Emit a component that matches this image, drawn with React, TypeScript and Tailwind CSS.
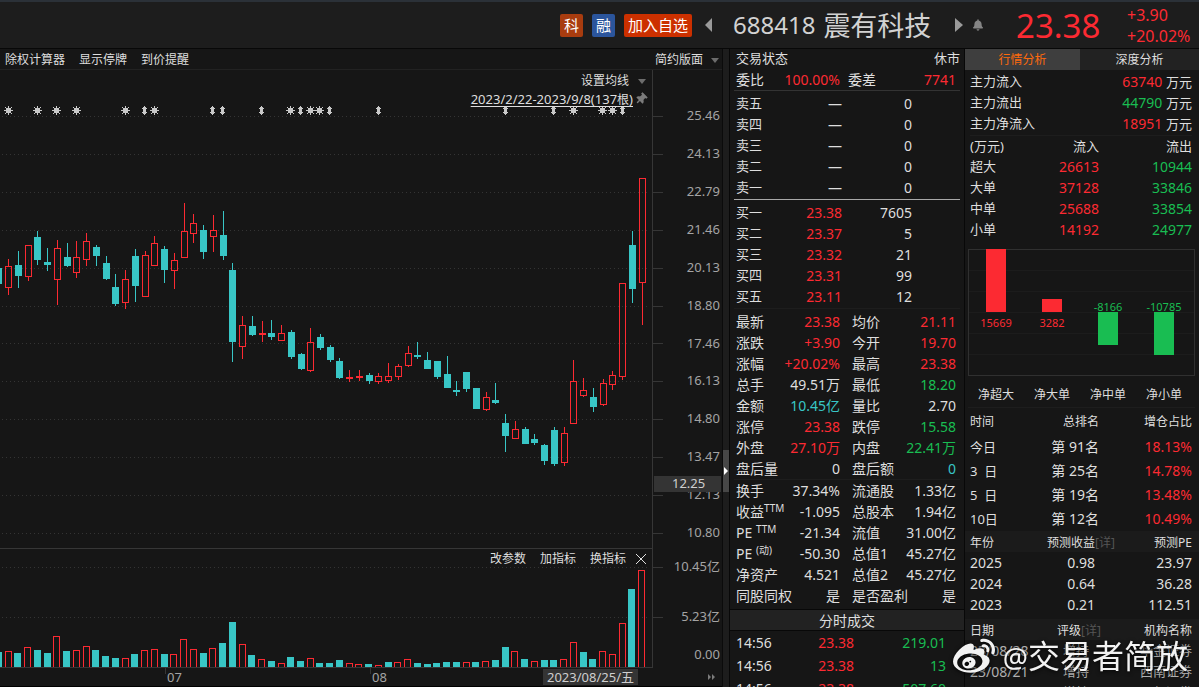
import React from "react";
import { FaBell, FaThumbtack, FaWeibo } from "react-icons/fa";

const RED = "#fc2a32";
const TEAL = "#38c6c6";
const GREEN = "#19bd52";

type Candle = ["r" | "t", number, number, number, number, number, number, number];

// kind, x, high, body top, body bottom, low, volume x, volume top
const candles: Candle[] = [
  ["t", -5, 268, 268, 284, 284, -5, 652],
  ["r", 5, 259, 266, 288, 295, 5, 651],
  ["t", 15, 251, 265, 276, 288, 14, 653],
  ["r", 25, 245, 245, 277, 281, 24, 647],
  ["t", 34, 231, 237, 260, 265, 34, 650],
  ["t", 44, 248, 262, 265, 271, 44, 653],
  ["r", 54, 240, 248, 280, 305, 53, 636],
  ["t", 64, 243, 257, 266, 267, 63, 651],
  ["r", 73, 241, 257, 273, 278, 73, 650],
  ["r", 83, 233, 241, 260, 266, 83, 646],
  ["t", 93, 245, 247, 256, 266, 92, 650],
  ["t", 103, 256, 263, 279, 280, 102, 656],
  ["t", 112, 274, 287, 304, 306, 112, 658],
  ["r", 122, 270, 279, 303, 309, 122, 658],
  ["t", 132, 249, 256, 286, 302, 131, 654],
  ["r", 142, 251, 255, 297, 297, 141, 650],
  ["r", 151, 236, 243, 266, 266, 151, 649],
  ["t", 161, 246, 249, 270, 283, 161, 654],
  ["r", 171, 253, 260, 271, 289, 170, 654],
  ["r", 181, 203, 231, 258, 258, 180, 639],
  ["r", 190, 214, 223, 234, 243, 190, 649],
  ["t", 200, 225, 230, 252, 259, 200, 653],
  ["r", 210, 215, 230, 237, 252, 209, 648],
  ["t", 220, 211, 235, 256, 260, 219, 643],
  ["t", 229, 263, 270, 342, 362, 229, 622],
  ["r", 239, 316, 325, 347, 359, 239, 644],
  ["t", 249, 316, 326, 335, 336, 248, 655],
  ["r", 259, 321, 333, 335, 342, 258, 659],
  ["t", 268, 320, 333, 337, 340, 268, 661],
  ["r", 278, 325, 333, 341, 341, 278, 663],
  ["t", 288, 330, 332, 357, 359, 287, 657],
  ["t", 298, 353, 354, 369, 370, 297, 661],
  ["r", 307, 328, 342, 371, 372, 307, 658],
  ["t", 317, 334, 337, 348, 350, 316, 663],
  ["t", 327, 345, 347, 360, 362, 326, 663],
  ["t", 336, 358, 361, 378, 379, 336, 660],
  ["r", 346, 370, 377, 379, 382, 346, 663],
  ["r", 356, 370, 376, 378, 381, 355, 664],
  ["t", 366, 373, 375, 381, 384, 365, 664],
  ["r", 375, 373, 376, 382, 384, 375, 665],
  ["r", 385, 363, 376, 381, 383, 385, 662],
  ["r", 395, 364, 366, 377, 380, 394, 662],
  ["r", 405, 346, 353, 366, 367, 404, 659],
  ["t", 414, 342, 355, 357, 359, 414, 663],
  ["t", 424, 352, 360, 369, 369, 424, 664],
  ["t", 434, 361, 361, 377, 379, 433, 663],
  ["t", 444, 356, 374, 388, 388, 443, 662],
  ["t", 453, 381, 390, 392, 396, 453, 662],
  ["t", 463, 372, 372, 389, 392, 463, 662],
  ["t", 473, 388, 388, 409, 409, 472, 662],
  ["r", 483, 392, 397, 410, 411, 482, 661],
  ["t", 492, 383, 400, 403, 404, 492, 660],
  ["t", 502, 414, 423, 436, 452, 502, 647],
  ["r", 512, 421, 429, 439, 439, 511, 651],
  ["t", 522, 427, 429, 444, 444, 521, 659],
  ["t", 531, 434, 439, 443, 445, 531, 661],
  ["t", 541, 444, 445, 461, 465, 541, 660],
  ["t", 551, 427, 430, 464, 466, 550, 660],
  ["r", 561, 427, 433, 463, 466, 560, 659],
  ["r", 570, 360, 381, 424, 424, 570, 642],
  ["r", 580, 378, 390, 396, 397, 580, 652],
  ["t", 590, 388, 397, 407, 412, 589, 659],
  ["r", 600, 379, 383, 405, 406, 599, 651],
  ["r", 609, 371, 375, 385, 390, 609, 654],
  ["r", 619, 283, 283, 377, 380, 619, 623],
  ["t", 629, 231, 245, 289, 303, 628, 589],
  ["r", 639, 178, 178, 283, 325, 638, 570],
];

// sessions where the volume bar is coloured differently from the candle
const volumeKind: Record<number, "r" | "t"> = { 40: "t", 41: "r", 48: "r", 55: "r", 60: "t" };

const gridRows = [116, 154, 192, 230, 268, 306, 343, 381, 419, 457, 495, 533, 567, 617];
const suns = [8, 37, 56, 76, 125, 154, 290, 310, 319, 573, 602, 612];
const arrows = [144, 212, 222, 261, 300, 329, 378, 505, 553, 622];

function ChartDrawing() {
  return (
    <svg
      viewBox="0 70 652 598"
      preserveAspectRatio="none"
      shapeRendering="crispEdges"
      className="block h-[598px] w-full"
      role="img"
      aria-label="K线图"
    >
      {gridRows.map((y) => (
        <line key={y} x1="2" x2="650" y1={y + 0.5} y2={y + 0.5} stroke="#343434" strokeDasharray="1 3" />
      ))}
      <rect x="0" y="548" width="652" height="1" fill="#363636" />
      {suns.map((x) => (
        <g key={x} fill="#c9c9c9">
          <rect x={x - 2} y="108" width="5" height="5" />
          <rect x={x} y="106" width="1" height="9" />
          <rect x={x - 4} y="110" width="9" height="1" />
          <rect x={x - 3} y="107" width="1" height="1" />
          <rect x={x + 3} y="107" width="1" height="1" />
          <rect x={x - 3} y="113" width="1" height="1" />
          <rect x={x + 3} y="113" width="1" height="1" />
        </g>
      ))}
      {arrows.map((x) => (
        <g key={x} fill="#c9c9c9">
          <rect x={x} y="106" width="1" height="9" />
          <rect x={x - 1} y="107" width="3" height="7" />
          <rect x={x - 2} y="108" width="5" height="1" />
          <rect x={x - 2} y="112" width="5" height="1" />
        </g>
      ))}
      {candles.map(([kind, x, high, top, bottom, low, vx, vTop], i) => {
        const color = kind === "r" ? RED : TEAL;
        const vKind = volumeKind[i] ?? kind;
        const hollow = kind === "r" && bottom - top > 3;
        return (
          <g key={i}>
            {top > high && <rect x={x + 3} y={high} width="1" height={top - high} fill={color} />}
            {low > bottom && <rect x={x + 3} y={bottom} width="1" height={low - bottom} fill={color} />}
            {hollow ? (
              <rect x={x + 0.5} y={top + 0.5} width="6" height={bottom - top - 1} fill="none" stroke={color} />
            ) : (
              <rect x={x} y={top} width="7" height={bottom - top} fill={color} />
            )}
            {vKind === "r" ? (
              <path d={`M${vx + 0.5} 667V${vTop + 0.5}H${vx + 6.5}V667`} fill="none" stroke={RED} />
            ) : (
              <rect x={vx} y={vTop} width="7" height={667 - vTop} fill={TEAL} />
            )}
          </g>
        );
      })}
      <rect x="0" y="667" width="652" height="1" fill="#363636" />
    </svg>
  );
}

function Caret() {
  return (
    <svg viewBox="0 0 8 5" className="h-[5px] w-2 shrink-0" aria-hidden="true">
      <path d="M0 0h8L4 5z" fill="#6c6c6c" />
    </svg>
  );
}

const priceLabels = ["25.46", "24.13", "22.79", "21.46", "20.13", "18.80", "17.46", "16.13", "14.80", "13.47", "12.13", "10.80"];

function Tick() {
  return <span className="h-px w-[10px] bg-[#363636]" />;
}

function ChartPanel() {
  return (
    <section className="flex min-w-0 flex-1 flex-col border-r border-[#0b0b0b] bg-[#161616]">
      <div className="flex h-[21px] shrink-0 items-center justify-between border-b border-[#222] pl-[5px] pr-[3px] pt-[2px] text-xs">
        <div className="flex gap-[14px]">
          <button type="button">除权计算器</button>
          <button type="button">显示停牌</button>
          <button type="button">到价提醒</button>
        </div>
        <button type="button" aria-haspopup="menu" className="flex items-center gap-2">
          简约版面
          <Caret />
        </button>
      </div>

      <div className="flex">
        <div className="relative min-w-0 flex-1">
          <ChartDrawing />
          <div className="absolute right-[5px] top-[2px] flex flex-col items-end text-xs leading-[18px]">
            <button type="button" aria-haspopup="menu" className="flex items-center gap-[9px] pr-px">
              设置均线
              <Caret />
            </button>
            <div className="flex items-center gap-[2px]">
              <a href="#range" className="text-[13px] leading-[18px] underline underline-offset-2">
                2023/2/22-2023/9/8(137<span className="text-xs">根</span>)
              </a>
              <button type="button" aria-label="固定">
                <FaThumbtack className="h-3 w-3 rotate-45 text-[#7b7b7b]" />
              </button>
            </div>
          </div>
          <div className="absolute right-[6px] top-[479px] flex h-5 items-center gap-[14px] text-xs">
            <button type="button">改参数</button>
            <button type="button">加指标</button>
            <button type="button">换指标</button>
            <button type="button" aria-label="关闭" className="-ml-1">
              <svg viewBox="0 0 10 10" className="h-[10px] w-[10px]">
                <path d="M0 0L10 10M10 0L0 10" stroke="#e0e0e0" strokeWidth="1" />
              </svg>
            </button>
          </div>
        </div>
        <div className="relative w-[70px] shrink-0 border-l border-[#363636] pt-[27px] text-[13px] text-[#a4a4a4]">
          {priceLabels.map((label) => (
            <div
              key={label}
              className={`flex items-center justify-between pr-[2px] ${label === "17.46" ? "h-[37px]" : "h-[38px]"}`}
            >
              <Tick />
              {label}
            </div>
          ))}
          <div className="mt-[5px] flex h-5 items-center justify-between pr-[2px]">
            <Tick />
            <span>10.45亿</span>
          </div>
          <div className="mt-[30px] flex h-5 items-center justify-between pr-[2px]">
            <Tick />
            <span>5.23亿</span>
          </div>
          <div className="mt-[18px] flex h-5 items-center justify-end pr-[2px]">0.00</div>
          <div className="absolute left-px right-px top-[406px] flex h-4 items-center bg-[#343434] pl-[18px] text-[#cfcfcf]">
            12.25
          </div>
        </div>
      </div>

      <div className="grid h-[18px] grid-cols-[165fr_205fr_282fr_70px] text-[13px] leading-[18px] text-[#a4a4a4]">
        <div />
        <div className="flex">
          <span className="h-[6px] w-px bg-[#363636]" />
          <span className="pl-px">07</span>
        </div>
        <div className="flex">
          <span className="h-[6px] w-px bg-[#363636]" />
          <span className="pl-px">08</span>
          <span className="ml-auto mr-[14px] mt-px h-4 whitespace-nowrap bg-[#343434] px-1 leading-4 text-[#cfcfcf]">
            2023/08/25/五
          </span>
        </div>
        <div className="flex items-center justify-end pr-[6px]">
          <svg viewBox="0 0 8 6" className="h-[6px] w-2" aria-hidden="true">
            <path d="M0 0l3 3-3 3zM4 0l3 3-3 3z" fill="#7b7b7b" />
          </svg>
        </div>
      </div>
      <div className="h-px bg-black" />
    </section>
  );
}

const sells = ["卖五", "卖四", "卖三", "卖二", "卖一"];
const buys = [
  ["买一", "23.38", "7605"],
  ["买二", "23.37", "5"],
  ["买三", "23.32", "21"],
  ["买四", "23.31", "99"],
  ["买五", "23.11", "12"],
];

type Stat = [React.ReactNode, string, string];
const W = "text-[#dedede]";
const R = "text-[#fc2a32]";
const G = "text-[#19bd52]";
const T = "text-[#38c6c6]";

const statsA: Stat[] = [
  ["最新", "23.38", R], ["均价", "21.11", R],
  ["涨跌", "+3.90", R], ["今开", "19.70", R],
  ["涨幅", "+20.02%", R], ["最高", "23.38", R],
  ["总手", "49.51万", W], ["最低", "18.20", G],
  ["金额", "10.45亿", T], ["量比", "2.70", W],
  ["涨停", "23.38", R], ["跌停", "15.58", G],
  ["外盘", "27.10万", R], ["内盘", "22.41万", G],
  ["盘后量", "0", W], ["盘后额", "0", T],
];

const statsB: Stat[] = [
  ["换手", "37.34%", W], ["流通股", "1.33亿", W],
  [<>收益<Sup>TTM</Sup></>, "-1.095", W], ["总股本", "1.94亿", W],
  [<>PE <Sup>TTM</Sup></>, "-21.34", W], ["流值", "31.00亿", W],
  [<>PE <Sup>(动)</Sup></>, "-50.30", W], ["总值1", "45.27亿", W],
  ["净资产", "4.521", W], ["总值2", "45.27亿", W],
  ["同股同权", "是", W], ["是否盈利", "是", W],
];

function Sup({ children }: { children: React.ReactNode }) {
  return <sup className="text-[10px] leading-none">{children}</sup>;
}

function Stats({ items }: { items: Stat[] }) {
  return (
    <dl className="grid grid-cols-2 gap-x-3 pl-[2px] pr-1">
      {items.map(([label, value, tone], i) => (
        <div key={i} className="flex h-[21px] justify-between whitespace-nowrap leading-[21px]">
          <dt>{label}</dt>
          <dd className={tone}>{value}</dd>
        </div>
      ))}
    </dl>
  );
}

function BookColumns() {
  return (
    <colgroup>
      <col className="w-[52px]" />
      <col className="w-[56px]" />
      <col className="w-[70px]" />
      <col />
    </colgroup>
  );
}

function TradePanel() {
  return (
    <section className="flex w-[235px] shrink-0 flex-col border-l border-[#080808] bg-[#161616] text-sm">
      <div className="px-1">
        <div className="flex h-5 justify-between pl-[2px] text-[13px] leading-[19px]">
          <span>交易状态</span>
          <span>休市</span>
        </div>
        <dl className="grid grid-cols-[104px_1fr] gap-x-2 border-b border-[#333] pl-[2px] pr-1 leading-[21px]">
          <div className="flex justify-between">
            <dt>委比</dt>
            <dd className={R}>100.00%</dd>
          </div>
          <div className="flex justify-between">
            <dt>委差</dt>
            <dd className={R}>7741</dd>
          </div>
        </dl>
        <div className="border-b border-[#a8a8a8] pb-px pt-[2px]">
          <table className="w-full table-fixed leading-[21px]">
            <BookColumns />
            <tbody>
              {sells.map((s) => (
                <tr key={s} className="h-[21px]">
                  <th scope="row" className="pl-[2px] text-left text-[13px] font-normal leading-[21px]">{s}</th>
                  <td className="text-right">—</td>
                  <td className="text-right">0</td>
                  <td />
                </tr>
              ))}
            </tbody>
          </table>
        </div>
        <div className="border-b border-[#1d1d1d] pb-px pt-[2px]">
          <table className="w-full table-fixed leading-[21px]">
            <BookColumns />
            <tbody>
              {buys.map(([name, price, qty]) => (
                <tr key={name} className="h-[21px]">
                  <th scope="row" className="pl-[2px] text-left text-[13px] font-normal leading-[21px]">{name}</th>
                  <td className={`text-right ${R}`}>{price}</td>
                  <td className="text-right">{qty}</td>
                  <td />
                </tr>
              ))}
            </tbody>
          </table>
        </div>
        <div className="border-b border-[#1d1d1d] pt-[2px]">
          <Stats items={statsA} />
        </div>
        <Stats items={statsB} />
      </div>
      <h2 className="mt-[3px] h-[22px] shrink-0 border-y border-[#080808] bg-[#222] pt-px text-center text-sm font-normal leading-[20px]">
        分时成交
      </h2>
      <table className="w-full table-fixed leading-[23px]">
        <colgroup>
          <col className="w-[54px]" />
          <col className="w-[70px]" />
          <col />
        </colgroup>
        <tbody>
          {["219.01", "13", "507.60"].map((v) => (
            <tr key={v} className="h-[23px]">
              <td className="pl-[6px]">14:56</td>
              <td className={`text-right ${R}`}>23.38</td>
              <td className={`pr-[18px] text-right ${G}`}>{v}</td>
            </tr>
          ))}
        </tbody>
      </table>
    </section>
  );
}

const mainFlow = [
  ["主力流入", "63740", R],
  ["主力流出", "44790", G],
  ["主力净流入", "18951", R],
];
const orders = [
  ["超大", "26613", "10944"],
  ["大单", "37128", "33846"],
  ["中单", "25688", "33854"],
  ["小单", "14192", "24977"],
];
const bars = [
  { value: "15669", name: "净超大", y: 0, h: 63, color: RED, textY: 78 },
  { value: "3282", name: "净大单", y: 50, h: 13, color: RED, textY: 78 },
  { value: "-8166", name: "净中单", y: 63, h: 33, color: GREEN, textY: 62 },
  { value: "-10785", name: "净小单", y: 63, h: 43, color: GREEN, textY: 62 },
];
const ranks = [
  ["今日", "第 91名", "18.13%"],
  ["3  日", "第 25名", "14.78%"],
  ["5  日", "第 19名", "13.48%"],
  ["10日", "第 12名", "10.49%"],
];
const forecasts = [
  ["2025", "0.98", "23.97"],
  ["2024", "0.64", "36.28"],
  ["2023", "0.21", "112.51"],
];
const ratings = [
  ["23/08/28", "增持", "华金证券"],
  ["23/08/21", "增持", "西南证券"],
  ["23/08/20", "增持", "西部证券"],
];

function Cols({ middle }: { middle: string }) {
  return (
    <colgroup>
      <col className="w-[60px]" />
      <col className={middle} />
      <col />
    </colgroup>
  );
}

function AnalysisPanel() {
  return (
    <section className="flex w-[235px] shrink-0 flex-col border-l border-[#080808] bg-[#161616] text-sm">
      <div role="tablist" className="grid h-[21px] shrink-0 grid-cols-[115px_1fr] bg-[#222] text-xs">
        <button type="button" role="tab" aria-selected="true" className="bg-[#3e3e3e] pt-px text-[#ff6a0c]">
          行情分析
        </button>
        <button type="button" role="tab" aria-selected="false" className="pt-px">
          深度分析
        </button>
      </div>

      <div className="pl-[5px] pr-[7px]">
        <dl className="border-b border-[#1d1d1d] pb-px pt-px">
          {mainFlow.map(([label, value, tone]) => (
            <div key={label} className="flex h-[21px] justify-between leading-[21px]">
              <dt className="text-[13px]">{label}</dt>
              <dd className={tone}>
                {value} <span className="text-[13px] text-[#dedede]">万元</span>
              </dd>
            </div>
          ))}
        </dl>
        <table className="w-full table-fixed">
          <Cols middle="w-[69px]" />
          <thead>
            <tr className="h-[20px] text-[13px] leading-[20px]">
              <th className="text-left font-normal">(万元)</th>
              <th className="text-right font-normal">流入</th>
              <th className="text-right font-normal">流出</th>
            </tr>
          </thead>
          <tbody>
            {orders.map(([name, inflow, outflow]) => (
              <tr key={name} className="h-[21px] leading-[21px]">
                <th scope="row" className="text-left text-[13px] font-normal leading-[21px]">{name}</th>
                <td className={`text-right ${R}`}>{inflow}</td>
                <td className={`text-right ${G}`}>{outflow}</td>
              </tr>
            ))}
          </tbody>
        </table>
      </div>

      <div className="mt-[9px] pl-[3px] pr-1">
        <svg viewBox="0 0 227 127" className="block w-full" role="img" aria-label="净流入">
          <rect x="0.5" y="0.5" width="226" height="126" fill="none" stroke="#303030" />
          {[21, 42, 63, 84, 105].map((y) => (
            <line key={y} x1="1" x2="226" y1={y + 0.5} y2={y + 0.5} stroke="#1c1c1c" />
          ))}
          {bars.map((b, i) => (
            <g key={b.name}>
              <rect x={18 + i * 56} y={b.y} width="20" height={b.h} fill={b.color} />
              <text x={28 + i * 56} y={b.textY} textAnchor="middle" fontSize="11" fill={b.color}>
                {b.value}
              </text>
            </g>
          ))}
        </svg>
        <div className="mt-2 grid h-6 grid-cols-4 border-b border-[#1d1d1d] pr-[3px] pt-px text-center text-xs leading-[20px]">
          {bars.map((b) => (
            <span key={b.name}>{b.name}</span>
          ))}
        </div>
      </div>

      <div className="pl-[5px] pr-[7px]">
        <table className="mt-[3px] w-full table-fixed">
          <Cols middle="w-[69px]" />
          <thead>
            <tr className="h-6 text-xs leading-[21px]">
              <th className="text-left align-top font-normal">时间</th>
              <th className="text-right align-top font-normal">总排名</th>
              <th className="text-right align-top font-normal">增仓占比</th>
            </tr>
          </thead>
          <tbody>
            {ranks.map(([period, rank, share]) => (
              <tr key={period} className="h-6 leading-6">
                <th scope="row" className="whitespace-pre text-left text-[13px] font-normal leading-6">{period}</th>
                <td className="text-right">{rank}</td>
                <td className={`text-right ${R}`}>{share}</td>
              </tr>
            ))}
          </tbody>
        </table>
      </div>

      <table className="w-full table-fixed">
        <colgroup>
          <col className="w-[65px]" />
          <col className="w-[85px]" />
          <col />
        </colgroup>
        <thead>
          <tr className="h-[21px] bg-[#1b1b1b] text-xs leading-[19px]">
            <th className="pl-[5px] pt-[2px] text-left font-normal">年份</th>
            <th className="pt-[2px] text-right font-normal">
              预测收益<a href="#forecast" className="text-[#555]">[详]</a>
            </th>
            <th className="pr-[7px] pt-[2px] text-right font-normal">预测PE</th>
          </tr>
        </thead>
        <tbody>
          {forecasts.map(([year, eps, pe]) => (
            <tr key={year} className="h-[21px] leading-[21px]">
              <td className="pl-[5px]">{year}</td>
              <td className="pr-5 text-right">{eps}</td>
              <td className="pr-[7px] text-right">{pe}</td>
            </tr>
          ))}
        </tbody>
      </table>

      <table className="mt-1 w-full table-fixed">
        <colgroup>
          <col className="w-[75px]" />
          <col className="w-[61px]" />
          <col />
        </colgroup>
        <thead>
          <tr className="h-[21px] bg-[#1b1b1b] text-xs leading-[19px]">
            <th className="pl-[5px] pt-[2px] text-left font-normal">日期</th>
            <th className="pt-[2px] text-right font-normal">
              评级<a href="#rating" className="text-[#555]">[详]</a>
            </th>
            <th className="pr-[7px] pt-[2px] text-right font-normal">机构名称</th>
          </tr>
        </thead>
        <tbody>
          {ratings.map(([date, grade, firm]) => (
            <tr key={date} className="h-[21px] text-[13px] leading-[21px] text-[#b0b0b0]">
              <td className="pl-[5px] text-sm leading-[21px]">{date}</td>
              <td className="pr-3 text-right">{grade}</td>
              <td className="pr-[7px] text-right">{firm}</td>
            </tr>
          ))}
        </tbody>
      </table>
    </section>
  );
}

function Header() {
  return (
    <header className="flex h-[49px] shrink-0 items-center justify-end border-b border-t-2 border-b-[#080808] border-t-[#2b3138] bg-[#1d1d1d]">
      <div className="mr-[13px] flex items-center gap-[9px] text-white">
        <span className="flex h-[23px] w-[23px] items-center justify-center rounded-[2px] bg-[#a83c0f] text-[15px]">科</span>
        <span className="flex h-[23px] w-[23px] items-center justify-center rounded-[2px] bg-[#2b559c] text-[15px]">融</span>
        <button type="button" className="flex h-[23px] items-center rounded-[2px] bg-[#cc3000] px-1 text-[15px]">
          加入自选
        </button>
      </div>
      <button type="button" aria-label="上一只" className="w-7">
        <svg viewBox="0 0 7 14" className="h-[14px] w-[7px]">
          <path d="M7 0v14L0 7z" fill="#9a9a9a" />
        </svg>
      </button>
      <h1 className="flex w-[222px] items-center whitespace-nowrap text-2xl text-[#d2d2d2]">
        688418<span className="ml-2 text-[27px] leading-none">震有科技</span>
      </h1>
      <button type="button" aria-label="下一只" className="w-[18px]">
        <svg viewBox="0 0 8 14" className="h-[14px] w-2">
          <path d="M0 0v14l8-7z" fill="#9a9a9a" />
        </svg>
      </button>
      <button type="button" aria-label="提醒" className="w-[43px]">
        <FaBell className="h-3 w-[10px] text-[#858585]" />
      </button>
      <strong className="w-[111px] text-[33px] font-normal leading-none text-[#fc2a32]">23.38</strong>
      <div className="w-[72px] pt-[2px] text-base leading-[21px] text-[#fc2a32]">
        <div>+3.90</div>
        <div>+20.02%</div>
      </div>
    </header>
  );
}

export default function App() {
  return (
    <div className="relative flex h-screen flex-col overflow-hidden bg-[#1d1d1d] font-['Noto_Sans','Noto_Sans_CJK_SC',sans-serif] text-[#dedede]">
      <Header />
      <main className="flex min-h-0 flex-1">
        <ChartPanel />
        <button type="button" aria-label="收起侧栏" className="flex w-[6px] shrink-0 flex-col pt-[401px]">
          <span className="flex h-[42px] w-full items-center justify-center bg-[#474747]">
            <svg viewBox="0 0 4 8" className="h-2 w-1">
              <path d="M0 0l4 4-4 4z" fill="#fff" />
            </svg>
          </span>
        </button>
        <TradePanel />
        <AnalysisPanel />
      </main>
      <div className="pointer-events-none absolute bottom-2 right-[11px] flex items-center gap-2 text-[#f2f2f2] drop-shadow-[0_1px_2px_rgba(0,0,0,0.9)]">
        <FaWeibo className="h-[42px] w-[42px]" />
        <span className="whitespace-nowrap text-[28px] leading-[44px]">
          @<span className="text-[32px]">交易者简放</span>
        </span>
      </div>
    </div>
  );
}
